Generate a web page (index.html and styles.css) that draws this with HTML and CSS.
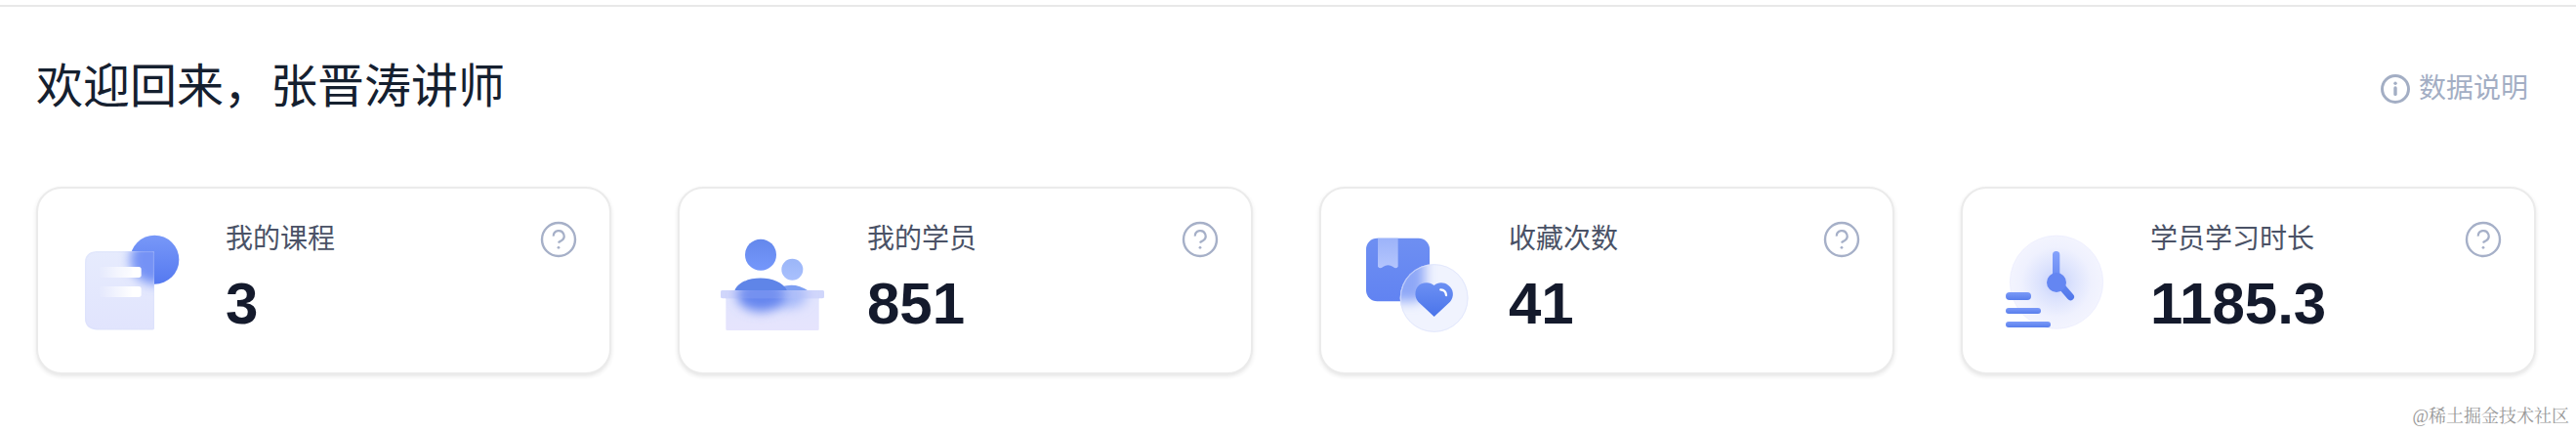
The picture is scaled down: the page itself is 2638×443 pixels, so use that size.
FILE: index.html
```
<!DOCTYPE html>
<html lang="zh-CN">
<head>
    <meta charset="UTF-8">
    <meta name="viewport" content="width=device-width, initial-scale=1.0">
    <title>讲师中心</title>
    <link rel="stylesheet" href="styles.css">
</head>
<body>

    <hr class="divider">

    <main class="page">
        <header class="header">
            <h1>欢迎回来，张晋涛讲师</h1>
            <a class="data-link" href="#">
                <svg class="info-icon" viewBox="0 0 30 30" aria-hidden="true">
                    <circle cx="15" cy="15" r="13.5" fill="none" stroke="currentColor" stroke-width="3"/>
                    <circle cx="15" cy="9.2" r="1.7" fill="currentColor"/>
                    <path d="M15 14v6.4" stroke="currentColor" stroke-width="3.4" stroke-linecap="round"/>
                </svg>
                数据说明
            </a>
        </header>

        <section class="cards">
            <div class="card">
                <svg class="card-icon" viewBox="135 141 360 360" aria-hidden="true">
                    <defs>
                        <linearGradient id="courseBall" x1="0" y1="0" x2="0" y2="1">
                            <stop offset="0" stop-color="#7898f8"/>
                            <stop offset="1" stop-color="#5579f0"/>
                        </linearGradient>
                        <linearGradient id="coursePaper" x1="0" y1="0" x2="0" y2="1">
                            <stop offset="0" stop-color="#e6ebfd"/>
                            <stop offset="1" stop-color="#e1e4fd"/>
                        </linearGradient>
                        <linearGradient id="courseLine" x1="0" y1="0" x2="1" y2="0">
                            <stop offset="0" stop-color="#fff" stop-opacity="0"/>
                            <stop offset="0.8" stop-color="#fff"/>
                        </linearGradient>
                        <clipPath id="courseClip">
                            <path d="M206 231H378Q384 231 384 237V467Q384 473 378 473H206Q171 468 171 438V266Q171 234 206 231Z"/>
                        </clipPath>
                        <filter id="courseBlur" x="-50%" y="-50%" width="200%" height="200%">
                            <feGaussianBlur stdDeviation="16"/>
                        </filter>
                    </defs>
                    <circle cx="385" cy="257" r="75" fill="url(#courseBall)"/>
                    <g clip-path="url(#courseClip)">
                        <rect x="171" y="231" width="213" height="242" fill="url(#coursePaper)"/>
                        <circle cx="385" cy="257" r="75" fill="#7592f5" filter="url(#courseBlur)"/>
                        <path d="M206 232H383V472H206Q172 468 172 438V266Q172 234 206 232Z" fill="none" stroke="#d5dafa" stroke-opacity="0.25" stroke-width="5"/>
                    </g>
                    <rect x="213" y="279" width="131" height="33" rx="8" fill="url(#courseLine)"/>
                    <rect x="213" y="339" width="131" height="33" rx="8" fill="url(#courseLine)"/>
                </svg>
                <div class="card-body">
                    <div class="card-label">我的课程</div>
                    <div class="card-value">3</div>
                </div>
                <button class="help" type="button" aria-label="我的课程说明">
                    <svg viewBox="0 0 36 36" aria-hidden="true">
                        <circle cx="18" cy="18" r="17" fill="none" stroke="currentColor" stroke-width="2.4"/>
                        <path d="M12.8 14.6a5.4 5.4 0 1 1 8 4.6q-2.4 1.2-2.9 2.2" fill="none" stroke="currentColor" stroke-width="2.2"/>
                        <circle cx="18" cy="26.3" r="1.4" fill="currentColor"/>
                    </svg>
                </button>
            </div>

            <div class="card">
                <svg class="card-icon" viewBox="126 141 360 360" aria-hidden="true">
                    <defs>
                        <linearGradient id="userHead" x1="0" y1="0" x2="0" y2="1">
                            <stop offset="0" stop-color="#6488ec"/>
                            <stop offset="1" stop-color="#7597fb"/>
                        </linearGradient>
                        <linearGradient id="userSmall" x1="0" y1="0" x2="0" y2="1">
                            <stop offset="0" stop-color="#9bb6f8"/>
                            <stop offset="1" stop-color="#a9c0fd"/>
                        </linearGradient>
                        <linearGradient id="userDesk" x1="0" y1="0" x2="0" y2="1">
                            <stop offset="0" stop-color="#e0e4fd"/>
                            <stop offset="1" stop-color="#e6e4fd"/>
                        </linearGradient>
                        <clipPath id="deskClip">
                            <path d="M150 351H456Q462 351 462 357V370Q462 376 456 376H446V470Q446 474 442 474H164Q160 474 160 470V376H150Q144 376 144 370V357Q144 351 150 351Z"/>
                        </clipPath>
                        <filter id="deskBlur" x="-50%" y="-80%" width="200%" height="260%">
                            <feGaussianBlur stdDeviation="16"/>
                        </filter>
                    </defs>
                    <circle cx="267" cy="242" r="48" fill="url(#userHead)"/>
                    <circle cx="364" cy="287" r="33" fill="url(#userSmall)"/>
                    <path d="M330 352V340Q376 326 412 352Z" fill="#7e9ff2"/>
                    <path d="M187 352C204 302 325 300 348 352Z" fill="#5f85e8"/>
                    <g clip-path="url(#deskClip)">
                        <rect x="144" y="351" width="318" height="123" fill="url(#userDesk)"/>
                        <rect x="144" y="351" width="318" height="25" fill="#d2d7fc"/>
                        <ellipse cx="352" cy="366" rx="58" ry="40" fill="#a9bbf9" filter="url(#deskBlur)"/>
                        <ellipse cx="268" cy="366" rx="74" ry="50" fill="#6686ef" filter="url(#deskBlur)"/>
                        <rect x="144" y="351" width="318" height="25" fill="#c9cffb" fill-opacity="0.15"/>
                    </g>
                </svg>
                <div class="card-body">
                    <div class="card-label">我的学员</div>
                    <div class="card-value">851</div>
                </div>
                <button class="help" type="button" aria-label="我的学员说明">
                    <svg viewBox="0 0 36 36" aria-hidden="true">
                        <circle cx="18" cy="18" r="17" fill="none" stroke="currentColor" stroke-width="2.4"/>
                        <path d="M12.8 14.6a5.4 5.4 0 1 1 8 4.6q-2.4 1.2-2.9 2.2" fill="none" stroke="currentColor" stroke-width="2.2"/>
                        <circle cx="18" cy="26.3" r="1.4" fill="currentColor"/>
                    </svg>
                </button>
            </div>

            <div class="card">
                <svg class="card-icon" viewBox="132 141 360 360" aria-hidden="true">
                    <defs>
                        <linearGradient id="favBook" x1="0" y1="0" x2="0" y2="1">
                            <stop offset="0" stop-color="#6e8ff2"/>
                            <stop offset="1" stop-color="#6183f2"/>
                        </linearGradient>
                        <linearGradient id="favMark" x1="0" y1="0" x2="0" y2="1">
                            <stop offset="0" stop-color="#9cb3f9"/>
                            <stop offset="1" stop-color="#b4c5fd"/>
                        </linearGradient>
                        <linearGradient id="favHeart" x1="0" y1="0" x2="0" y2="1">
                            <stop offset="0" stop-color="#6c90f3"/>
                            <stop offset="1" stop-color="#4a74ea"/>
                        </linearGradient>
                        <clipPath id="favClip">
                            <circle cx="371" cy="375" r="105"/>
                        </clipPath>
                        <filter id="favBlur" x="-50%" y="-50%" width="200%" height="200%">
                            <feGaussianBlur stdDeviation="18"/>
                        </filter>
                    </defs>
                    <rect x="162" y="191" width="195" height="194" rx="34" fill="url(#favBook)"/>
                    <path d="M198 191H260V278Q254 287 245 279Q229 268 214 279Q204 287 198 278Z" fill="url(#favMark)"/>
                    <g clip-path="url(#favClip)">
                        <rect x="260" y="265" width="220" height="220" fill="#f0f3fe"/>
                        <rect x="162" y="191" width="180" height="194" rx="30" fill="#8ea7f7" filter="url(#favBlur)"/>
                    </g>
                    <circle cx="371" cy="375" r="103" fill="none" stroke="#dde2fb" stroke-opacity="0.7" stroke-width="3"/>
                    <path d="M371 432L322 386C307 369 312 339 332 331C347 324 362 328 371 336C382 326 400 325 414 335C432 347 433 371 420 386Z" fill="url(#favHeart)"/>
                    <path d="M391 349Q407 350 408 366" fill="none" stroke="#fff" stroke-width="7" stroke-linecap="round"/>
                </svg>
                <div class="card-body">
                    <div class="card-label">收藏次数</div>
                    <div class="card-value">41</div>
                </div>
                <button class="help" type="button" aria-label="收藏次数说明">
                    <svg viewBox="0 0 36 36" aria-hidden="true">
                        <circle cx="18" cy="18" r="17" fill="none" stroke="currentColor" stroke-width="2.4"/>
                        <path d="M12.8 14.6a5.4 5.4 0 1 1 8 4.6q-2.4 1.2-2.9 2.2" fill="none" stroke="currentColor" stroke-width="2.2"/>
                        <circle cx="18" cy="26.3" r="1.4" fill="currentColor"/>
                    </svg>
                </button>
            </div>

            <div class="card">
                <svg class="card-icon" viewBox="138 141 360 360" aria-hidden="true">
                    <defs>
                        <radialGradient id="clockFace">
                            <stop offset="0" stop-color="#c3cefc"/>
                            <stop offset="0.35" stop-color="#dbe2fd"/>
                            <stop offset="0.75" stop-color="#eff1fe"/>
                            <stop offset="1" stop-color="#f3f4fe"/>
                        </radialGradient>
                        <linearGradient id="clockHand" gradientUnits="userSpaceOnUse" x1="0" y1="231" x2="0" y2="382">
                            <stop offset="0" stop-color="#86a3fc"/>
                            <stop offset="1" stop-color="#4f76ea"/>
                        </linearGradient>
                        <linearGradient id="clockBar" x1="0" y1="0" x2="0" y2="1">
                            <stop offset="0" stop-color="#7b9af8"/>
                            <stop offset="1" stop-color="#587eec"/>
                        </linearGradient>
                    </defs>
                    <circle cx="318" cy="326" r="143" fill="url(#clockFace)" stroke="#eaecfd" stroke-width="2"/>
                    <path d="M317 242V320L361 371" fill="none" stroke="url(#clockHand)" stroke-width="22" stroke-linecap="round"/>
                    <circle cx="318" cy="327" r="30" fill="#6486f2"/>
                    <rect x="162" y="357" width="78" height="24" rx="12" fill="url(#clockBar)"/>
                    <rect x="162" y="405" width="108" height="18" rx="9" fill="url(#clockBar)"/>
                    <rect x="162" y="447" width="138" height="18" rx="9" fill="url(#clockBar)"/>
                </svg>
                <div class="card-body">
                    <div class="card-label">学员学习时长</div>
                    <div class="card-value">1185.3</div>
                </div>
                <button class="help" type="button" aria-label="学员学习时长说明">
                    <svg viewBox="0 0 36 36" aria-hidden="true">
                        <circle cx="18" cy="18" r="17" fill="none" stroke="currentColor" stroke-width="2.4"/>
                        <path d="M12.8 14.6a5.4 5.4 0 1 1 8 4.6q-2.4 1.2-2.9 2.2" fill="none" stroke="currentColor" stroke-width="2.2"/>
                        <circle cx="18" cy="26.3" r="1.4" fill="currentColor"/>
                    </svg>
                </button>
            </div>
        </section>
    </main>

    <footer class="source">@稀土掘金技术社区</footer>

</body>
</html>
```

FILE: styles.css
```
* {
    box-sizing: border-box;
    margin: 0;
    padding: 0;
}
body {
    font-family: "Liberation Sans", "Noto Sans CJK SC", sans-serif;
    background-color: #fff;
    color: #15202f;
    padding-top: 5px;
}
.divider {
    border: none;
    height: 2px;
    background-color: #e8e8e8;
}
.page {
    padding: 50px 41px 0 37px;
}
.header {
    display: flex;
    align-items: flex-end;
    justify-content: space-between;
    padding-right: 8px;
    margin-bottom: 70px;
}
h1 {
    font-size: 48px;
    font-weight: 400;
    line-height: 64px;
}
.data-link {
    display: flex;
    align-items: center;
    gap: 9px;
    color: #a3aec4;
    font-size: 28px;
    line-height: 60px;
    text-decoration: none;
}
.info-icon {
    width: 30px;
    height: 30px;
}
.cards {
    display: grid;
    grid-template-columns: repeat(4, 1fr);
    gap: 68px;
}
.card {
    display: flex;
    align-items: flex-start;
    background-color: #fff;
    border: 2px solid #ebebeb;
    border-radius: 26px;
    padding: 34px 34px 34px 36px;
    box-shadow: 0 2px 4px rgba(0, 0, 0, 0.1);
}
.card-icon {
    width: 120px;
    height: 120px;
    margin-right: 36px;
    flex-shrink: 0;
}
.card-body {
    flex: 1;
}
.card-label {
    color: #4a5266;
    font-size: 28px;
    line-height: 36px;
}
.card-value {
    color: #141a2c;
    font-size: 60px;
    font-weight: bold;
    line-height: 64px;
    margin-top: 16px;
}
.help {
    width: 36px;
    height: 36px;
    background: none;
    border: none;
    color: #a6b0c8;
    cursor: pointer;
}
.help svg {
    display: block;
    width: 100%;
    overflow: visible;
}
.source {
    padding: 31px 7px 4px;
    color: #999;
    font-family: "Liberation Serif", "Noto Serif CJK SC", "Noto Sans CJK SC", serif;
    font-size: 18px;
    line-height: 24px;
    text-align: right;
}
```
